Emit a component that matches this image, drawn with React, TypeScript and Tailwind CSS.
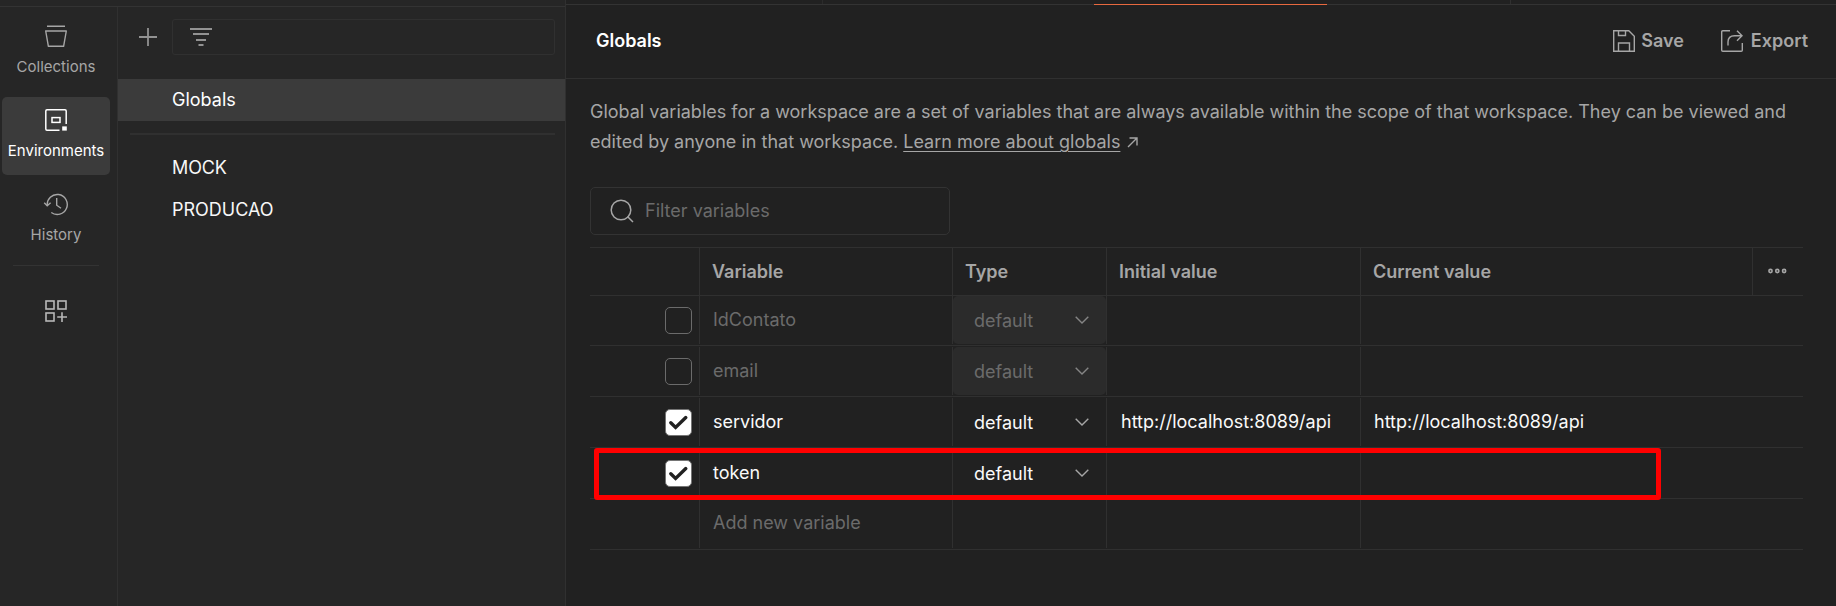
import React from 'react';

const muted = 'text-[#a6a6a6]';

function Collections() {
  return (
    <svg width="24" height="24" viewBox="0 0 24 24" fill="none" stroke="#a6a6a6" strokeWidth="1.4">
      <path d="M3 2.2H21M1.7 7H22.3L19.6 22.3H4.4Z" strokeLinejoin="round" />
    </svg>
  );
}

function Environments() {
  return (
    <svg width="24" height="24" viewBox="0 0 24 24" fill="none" stroke="#fff" strokeWidth="1.5">
      <path d="M15.5 22.2H3Q1.8 22.2 1.8 21V3Q1.8 1.8 3 1.8H21Q22.2 1.8 22.2 3V16" />
      <rect x="8" y="9.6" width="8" height="4.8" />
      <rect x="18.2" y="18.4" width="4.6" height="4.2" fill="#fff" stroke="none" />
    </svg>
  );
}

function History() {
  return (
    <svg width="26" height="24" viewBox="0 0 26 24" fill="none" stroke="#a6a6a6" strokeWidth="1.4">
      <path d="M4.3 13.5A10 10 0 1 1 8.3 20.5" />
      <path d="M1.2 10.8L4.2 13.8L7.6 10.8M13.7 6V13.2L18 16.2" />
    </svg>
  );
}

function Configure() {
  return (
    <svg width="24" height="24" viewBox="0 0 24 24" fill="none" stroke="#b8b8b8" strokeWidth="1.6">
      <rect x="2" y="2" width="8" height="8" />
      <rect x="14" y="2" width="8" height="8" />
      <rect x="2" y="14" width="8" height="8" />
      <path d="M18 13.2V23M13.2 18H23" />
    </svg>
  );
}

function Chevron({ on }: { on: boolean }) {
  return (
    <svg width="16" height="10" viewBox="0 0 16 10" fill="none" stroke={on ? '#a6a6a6' : '#858585'} strokeWidth="1.4">
      <path d="M1.7 1.7L8 8L14.3 1.7" />
    </svg>
  );
}

function Check({ on }: { on: boolean }) {
  return on ? (
    <span className="flex h-[27px] w-[27px] items-center justify-center rounded-[5px] border border-[#757575] bg-white">
      <svg width="21" height="18" viewBox="0 0 21 18" fill="none" stroke="#212121" strokeWidth="3.4">
        <path d="M2.8 8.8L7.6 13.4L17.8 3.6" strokeLinecap="round" />
      </svg>
    </span>
  ) : (
    <span className="h-[27px] w-[27px] rounded-[5px] border border-[#6b6b6b]" />
  );
}

const rows = [
  { name: 'IdContato', on: false, value: '' },
  { name: 'email', on: false, value: '' },
  { name: 'servidor', on: true, value: 'http://localhost:8089/api' },
  { name: 'token', on: true, value: '' },
];

const cols = 'grid grid-cols-[109px_253px_154px_254px_1fr]';
const line = 'border-l border-[#303030]';

export default function App() {
  return (
    <div className="flex h-[606px] w-[1836px] overflow-hidden bg-[#212121] font-['Inter',sans-serif] text-[18px] leading-6">
      <div className="flex w-[566px] shrink-0 flex-col border-r border-[#303030] bg-[#262626]">
        <div className="h-[7px] shrink-0 border-b border-[#333333]" />
        <div className="flex flex-1">
          <nav className="flex w-[118px] shrink-0 flex-col items-center border-r border-[#303030] pr-[5px] text-[15px] leading-5">
            <div className="flex h-[90px] flex-col items-center pt-[17px]">
              <Collections />
              <span className={`mt-[9px] ${muted}`}>Collections</span>
            </div>
            <div className="flex h-[78px] w-[108px] flex-col items-center rounded-[5px] bg-[#3b3b3b] pt-[11px]">
              <Environments />
              <span className="mt-[9px] text-white">Environments</span>
            </div>
            <div className="mt-[17px] flex h-[73px] flex-col items-center">
              <History />
              <span className={`mt-[9px] ${muted}`}>History</span>
            </div>
            <div className="h-px w-[86px] bg-[#333333]" />
            <div className="mt-[33px]">
              <Configure />
            </div>
          </nav>
          <div className="min-w-0 flex-1 pt-3">
            <div className="flex items-center pr-2.5 pl-[21px]">
              <svg width="18" height="18" viewBox="0 0 18 18" stroke="#929292" strokeWidth="1.8">
                <path d="M9 0V18M0 9H18" />
              </svg>
              <div className="ml-[15px] flex h-9 flex-1 items-center rounded-[3px] border border-[#303030] pl-[17px]">
                <svg width="22" height="18" viewBox="0 0 22 18" stroke="#929292" strokeWidth="1.8">
                  <path d="M0 1H22M3 6H19M6 12H16M8.5 17H13.5" />
                </svg>
              </div>
            </div>
            <div className="mt-6 flex h-[42px] items-center bg-[#3b3b3b] pl-[54px] text-white">Globals</div>
            <div className="mt-3 mr-2.5 ml-3 h-[2px] bg-[#303030]" />
            <div className="mt-3 flex h-[42px] items-center pl-[54px] tracking-[-0.1px] text-[#f7f7f7]">MOCK</div>
            <div className="flex h-[42px] items-center pl-[54px] text-[#f7f7f7]">PRODUCAO</div>
          </div>
        </div>
      </div>

      <main className="min-w-0 flex-1">
        <div className="flex h-[5px] border-b border-[#333333]">
          <div className="h-1 w-[257px] border-r border-[#2b2b2b]" />
          <div className="w-[271px]" />
          <div className="h-[5px] w-[233px] border-b border-[#e8693f]" />
          <div className="h-1 w-[184px] border-r border-[#303030]" />
        </div>
        <header className="flex h-[74px] items-center border-b border-[#303030] pr-7 pb-px pl-[30px] font-semibold">
          <h1 className="flex-1 text-white">Globals</h1>
          <div className={`flex items-center ${muted}`}>
            <svg width="24" height="24" viewBox="0 0 24 24" fill="none" stroke="#a6a6a6" strokeWidth="1.4">
              <path d="M1.7 1.7H16.8L22.3 7.2V22.3H1.7ZM6.5 1.7V6.5H13.5V1.7M6.5 22.3V14H17.5V22.3" />
            </svg>
            <span className="ml-[5px]">Save</span>
            <svg className="ml-9" width="24" height="24" viewBox="0 0 24 24" fill="none" stroke="#a6a6a6" strokeWidth="1.4">
              <path d="M10 1.7H2.8Q1.7 1.7 1.7 2.8V21.2Q1.7 22.3 2.8 22.3H21.2Q22.3 22.3 22.3 21.2V14" />
              <path d="M8 16.5V13Q8 6.7 14.5 6.7H22M17 1.7L22 6.7L17 11.7" />
            </svg>
            <span className="ml-[7px]">Export</span>
          </div>
        </header>
        <div className="pt-[18px] pr-[33px] pl-6">
          <p className={`leading-[30px] whitespace-nowrap ${muted}`}>
            <span className="tracking-[-0.008px]">
              Global variables for a workspace are a set of variables that are always available within the scope of that workspace. They can be viewed and
            </span>
            <br />
            <span className="tracking-[0.01px]">edited by anyone in that workspace. </span>
            <a className="underline decoration-1 underline-offset-[3px]">Learn more about globals</a>
            <svg className="ml-[7px] inline-block align-baseline" width="11" height="11" viewBox="0 0 11 11" fill="none" stroke="#a6a6a6" strokeWidth="1.4">
              <path d="M1 10L10 1M2.5 1H10V8.5" />
            </svg>
          </p>
          <div className="mt-[30px] flex h-12 w-[360px] items-center rounded-[5px] border border-[#333333] pl-[19px] text-[#6b6b6b]">
            <svg width="24" height="24" viewBox="0 0 24 24" fill="none" stroke="#a6a6a6" strokeWidth="1.5">
              <circle cx="11" cy="11" r="9.8" />
              <path d="M17.5 17.5L23 23" />
            </svg>
            <span className="ml-[11px]">Filter variables</span>
          </div>

          <div className="relative mt-3 w-[1213px]">
            <div className={`${cols} h-[49px] border-y border-[#303030] font-semibold ${muted}`}>
              <div />
              <div className={`flex items-center pl-3 ${line}`}>Variable</div>
              <div className={`flex items-center pl-3 ${line}`}>Type</div>
              <div className={`flex items-center pl-3 ${line}`}>Initial value</div>
              <div className={`flex items-center pl-3 ${line}`}>
                <span className="flex-1">Current value</span>
                <span className={`flex h-full w-[51px] items-center pb-px pl-[15px] ${line}`}>
                  <svg width="19" height="6" viewBox="0 0 19 6" fill="none" stroke="#a6a6a6" strokeWidth="1.6">
                    <circle cx="2.5" cy="3" r="1.6" />
                    <circle cx="9.3" cy="3" r="1.6" />
                    <circle cx="16.1" cy="3" r="1.6" />
                  </svg>
                </span>
              </div>
            </div>
            {rows.map((r, i) => (
              <div
                key={r.name}
                className={`${cols} border-b border-[#303030] ${i === 0 ? 'h-[50px]' : 'h-[51px] pt-px'} ${r.on ? 'text-[#fafafa]' : 'text-[#6b6b6b]'}`}
              >
                <div className="flex items-center justify-end pr-[7px]">
                  <Check on={r.on} />
                </div>
                <div className={`flex h-12 items-center pl-[13px] ${line}`}>{r.name}</div>
                <div className={`h-12 ${line}`}>
                  <div className={`flex h-12 items-center justify-between rounded-[5px] pt-[2px] pr-4 pl-[21px] ${r.on ? '' : 'bg-[#2b2b2b]'}`}>
                    default
                    <span className="pb-[2px]">
                      <Chevron on={r.on} />
                    </span>
                  </div>
                </div>
                <div className={`flex h-12 items-center pl-[14px] ${line}`}>{r.value}</div>
                <div className={`flex h-12 items-center pl-[13px] ${line}`}>{r.value}</div>
              </div>
            ))}
            <div className={`${cols} h-[51px] border-b border-[#303030] pt-px text-[#6b6b6b]`}>
              <div />
              <div className={`flex h-12 items-center pb-[3px] pl-[13px] ${line}`}>Add new variable</div>
              <div className={`h-12 ${line}`} />
              <div className={`h-12 ${line}`} />
              <div className={`h-12 ${line}`} />
            </div>
            <div className="absolute top-[201px] left-1 h-[52px] w-[1067px] rounded-[3px] border-[5px] border-[#ff0000]" />
          </div>
        </div>
      </main>
    </div>
  );
}
